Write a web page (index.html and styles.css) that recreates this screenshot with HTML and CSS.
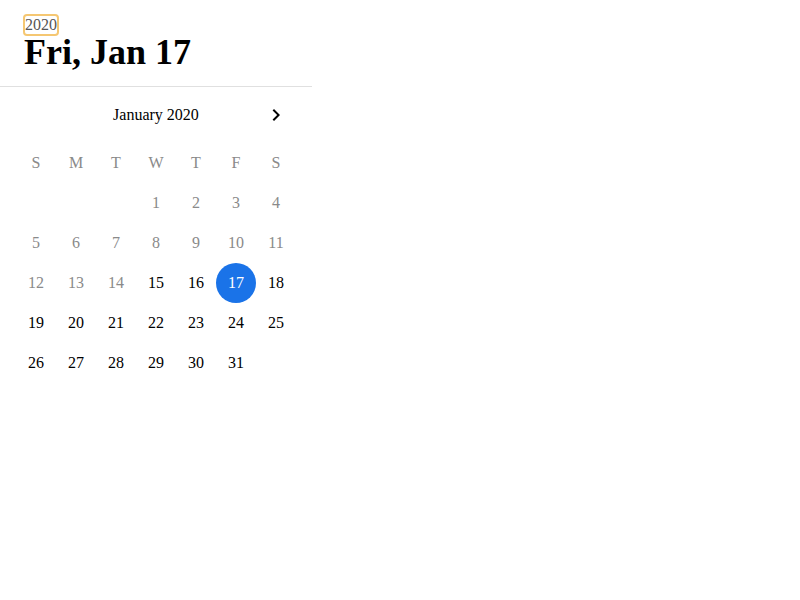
FILE: index.html
```html
<!DOCTYPE html>
<html>
<head>
<meta charset="utf-8">
<link rel="stylesheet" href="styles.css">
</head>
<body>
<div class="picker">
  <div class="toolbar">
    <div class="year-row"><span class="year">2020</span></div>
    <div class="date-title">Fri, Jan 17</div>
  </div>
  <div class="month-header">
    <span class="month-label">January 2020</span>
    <span class="next">
      <svg width="24" height="24" viewBox="0 0 24 24"><path d="M10 6L8.59 7.41 13.17 12l-4.58 4.59L10 18l6-6z" fill="#000"/></svg>
    </span>
  </div>
  <div class="grid">
    <div class="wd">S</div><div class="wd">M</div><div class="wd">T</div><div class="wd">W</div><div class="wd">T</div><div class="wd">F</div><div class="wd">S</div>
    <div class="day"></div><div class="day"></div><div class="day"></div>
    <div class="day off">1</div><div class="day off">2</div><div class="day off">3</div><div class="day off">4</div>
    <div class="day off">5</div><div class="day off">6</div><div class="day off">7</div><div class="day off">8</div><div class="day off">9</div><div class="day off">10</div><div class="day off">11</div>
    <div class="day off">12</div><div class="day off">13</div><div class="day off">14</div><div class="day">15</div><div class="day">16</div><div class="day"><span class="sel">17</span></div><div class="day">18</div>
    <div class="day">19</div><div class="day">20</div><div class="day">21</div><div class="day">22</div><div class="day">23</div><div class="day">24</div><div class="day">25</div>
    <div class="day">26</div><div class="day">27</div><div class="day">28</div><div class="day">29</div><div class="day">30</div><div class="day">31</div>
  </div>
</div>
</body>
</html>
```
FILE: styles.css
```css
html, body {
  margin: 0;
  padding: 0;
  background: #fff;
}
body {
  font-family: "Liberation Serif", "Times New Roman", serif;
  font-size: 16px;
  color: #000;
}
.picker {
  width: 312px;
}
.toolbar {
  padding: 16px 24px 16px 24px;
  border-bottom: 1px solid #e0e0e0;
}
.year-row {
  height: 18px;
}
.year {
  display: inline-block;
  margin-left: 1px;
  line-height: 18px;
  color: #555;
  outline: 2px solid #f5c772;
  border-radius: 2px;
}
.date-title {
  font-size: 36px;
  font-weight: bold;
  line-height: 36px;
}
.month-header {
  height: 56px;
  display: flex;
  align-items: center;
  justify-content: center;
  position: relative;
  line-height: 18px;
}
.next {
  position: absolute;
  left: 264px;
  top: 16px;
  width: 24px;
  height: 24px;
}
.next svg {
  display: block;
}
.grid {
  padding: 0 16px;
  display: grid;
  grid-template-columns: repeat(7, 40px);
  grid-auto-rows: 40px;
}
.wd, .day {
  display: flex;
  align-items: center;
  justify-content: center;
  line-height: 18px;
}
.wd {
  color: #8a8a8a;
}
.day.off {
  color: #8a8a8a;
}
.sel {
  width: 40px;
  height: 40px;
  border-radius: 50%;
  background: #1a73e8;
  color: #fff;
  display: flex;
  align-items: center;
  justify-content: center;
}
```
